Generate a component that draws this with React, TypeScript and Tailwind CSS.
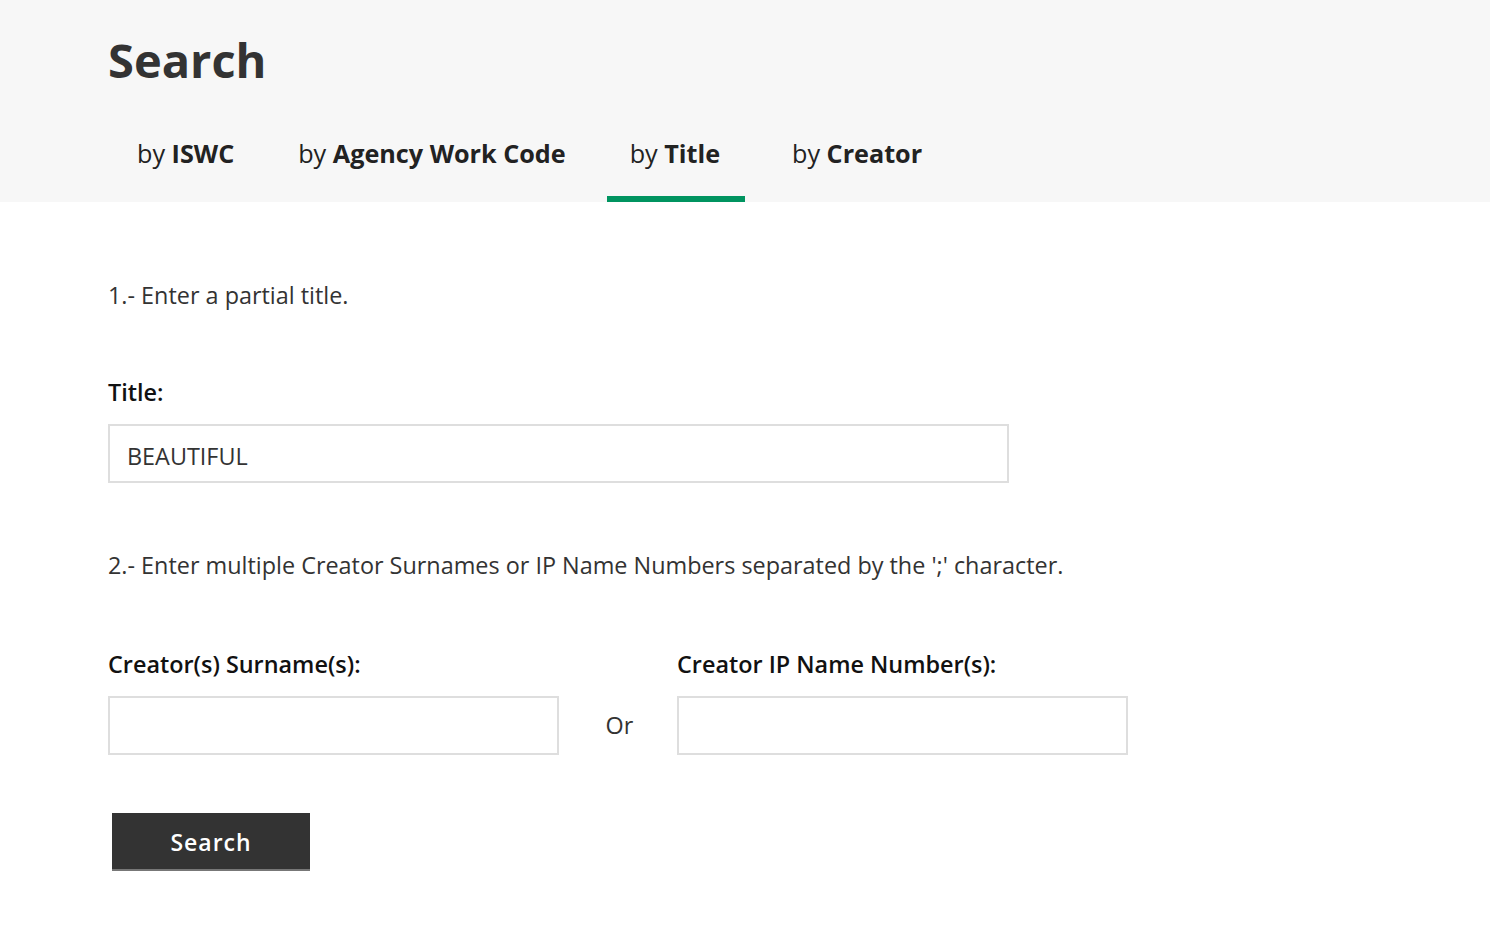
import { useState } from "react";

const tabs = [
  { key: "iswc", label: "ISWC", ml: "ml-0" },
  { key: "agency", label: "Agency Work Code", ml: "ml-[16px]" },
  { key: "title", label: "Title", ml: "ml-[16px]" },
  { key: "creator", label: "Creator", ml: "ml-[24px]" },
];

export default function App() {
  const [active, setActive] = useState("title");
  const [title, setTitle] = useState("BEAUTIFUL");

  return (
    <div className="min-h-screen bg-white font-['Open_Sans',sans-serif] text-[#333]">
      {/* header */}
      <div className="bg-[#f7f7f7] px-[108px] pt-[29px]">
        <h1 className="text-[47px] font-bold leading-[62px] text-[#333]">Search</h1>
        <div className="mt-[23px] flex items-end pl-[6px]">
          {tabs.map((t) => (
            <button
              key={t.key}
              onClick={() => setActive(t.key)}
              className={`${t.ml} h-[88px] border-b-[6px] pl-[23px] pr-[25px] pb-[2px] text-[25.2px] text-[#222] ${
                active === t.key ? "border-[#009460]" : "border-transparent"
              }`}
            >
              by <span className="font-bold">{t.label}</span>
            </button>
          ))}
        </div>
      </div>

      {/* form */}
      <div className="px-[108px] pt-[78px]">
        <p className="text-[23.4px] leading-[30px]">1.- Enter a partial title.</p>

        <label className="mt-[67px] block text-[23.4px] font-semibold leading-[30px] text-[#111]">Title:</label>
        <input
          value={title}
          onChange={(e) => setTitle(e.target.value)}
          className="mt-[17px] block h-[59px] w-[901px] border-2 border-[#dedede] px-[17px] pt-[4px] text-[23.4px] text-[#333] outline-none"
        />

        <p className="mt-[67px] text-[23.4px] leading-[30px]">
          2.- Enter multiple Creator Surnames or IP Name Numbers separated by the ';' character.
        </p>

        <div className="mt-[69px] flex items-end">
          <div className="w-[451px]">
            <label className="block text-[23.4px] font-semibold leading-[30px] text-[#111]">Creator(s) Surname(s):</label>
            <input className="mt-[17px] block h-[59px] w-full border-2 border-[#dedede] px-[17px] text-[23.4px] outline-none" />
          </div>
          <div className="flex h-[59px] w-[118px] items-center justify-center pl-[3px] text-[23.4px] text-[#333]">Or</div>
          <div className="w-[451px]">
            <label className="block text-[23.4px] font-semibold leading-[30px] text-[#111]">Creator IP Name Number(s):</label>
            <input className="mt-[17px] block h-[59px] w-full border-2 border-[#dedede] px-[17px] text-[23.4px] outline-none" />
          </div>
        </div>

        <button className="ml-[4px] mt-[58px] h-[58px] w-[198px] border-b-2 border-[#777] bg-[#333] pt-[2px] text-[23px] font-semibold tracking-[1px] text-white">
          Search
        </button>
      </div>
    </div>
  );
}
